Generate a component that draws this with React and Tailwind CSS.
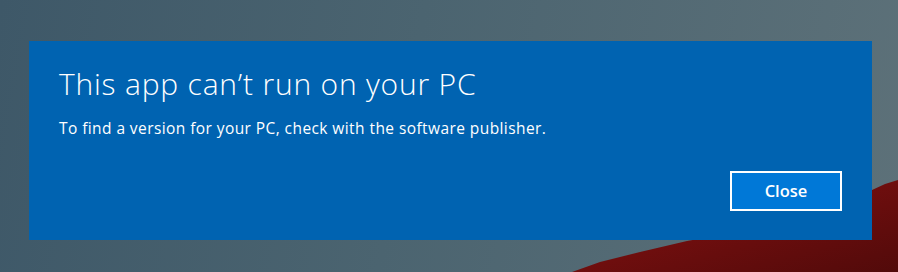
export default function App() {
  return (
    <div
      className="relative w-[898px] h-[272px] overflow-hidden bg-[linear-gradient(100deg,#3e5868_0%,#4b6470_45%,#5d7179_100%)] pt-[41px] pl-[29px]"
      style={{ fontFamily: '"Open Sans", "Noto Sans", sans-serif' }}
    >
      <svg className="absolute inset-0" width="898" height="272" viewBox="0 0 898 272">
        <defs>
          <linearGradient id="hill" x1="0" y1="0" x2="1" y2="1">
            <stop offset="0" stopColor="#8a1212" />
            <stop offset="1" stopColor="#520a0a" />
          </linearGradient>
        </defs>
        <path d="M572 272 L600 262 L640 252 L687 241 L760 228 L872 190 L885 184 L898 180 L898 272 Z" fill="url(#hill)" />
      </svg>
      <div className="relative w-[843px] h-[199px] bg-[#0063b1] flex flex-col pl-[30px] pr-[30px]">
        <div className="mt-[24px] text-white font-light text-[30px] leading-[38px] tracking-[0.8px]">
          This app can’t run on your PC
        </div>
        <div className="mt-[15px] text-white text-[15.5px] leading-[20px] tracking-[0.42px]">
          To find a version for your PC, check with the software publisher.
        </div>
        <div className="flex-1" />
        <div className="flex justify-end mb-[29px]">
          <button className="w-[112px] h-[40px] border-2 border-white bg-[#0078d7] text-white font-semibold text-[16.5px] leading-none">
            Close
          </button>
        </div>
      </div>
    </div>
  );
}
